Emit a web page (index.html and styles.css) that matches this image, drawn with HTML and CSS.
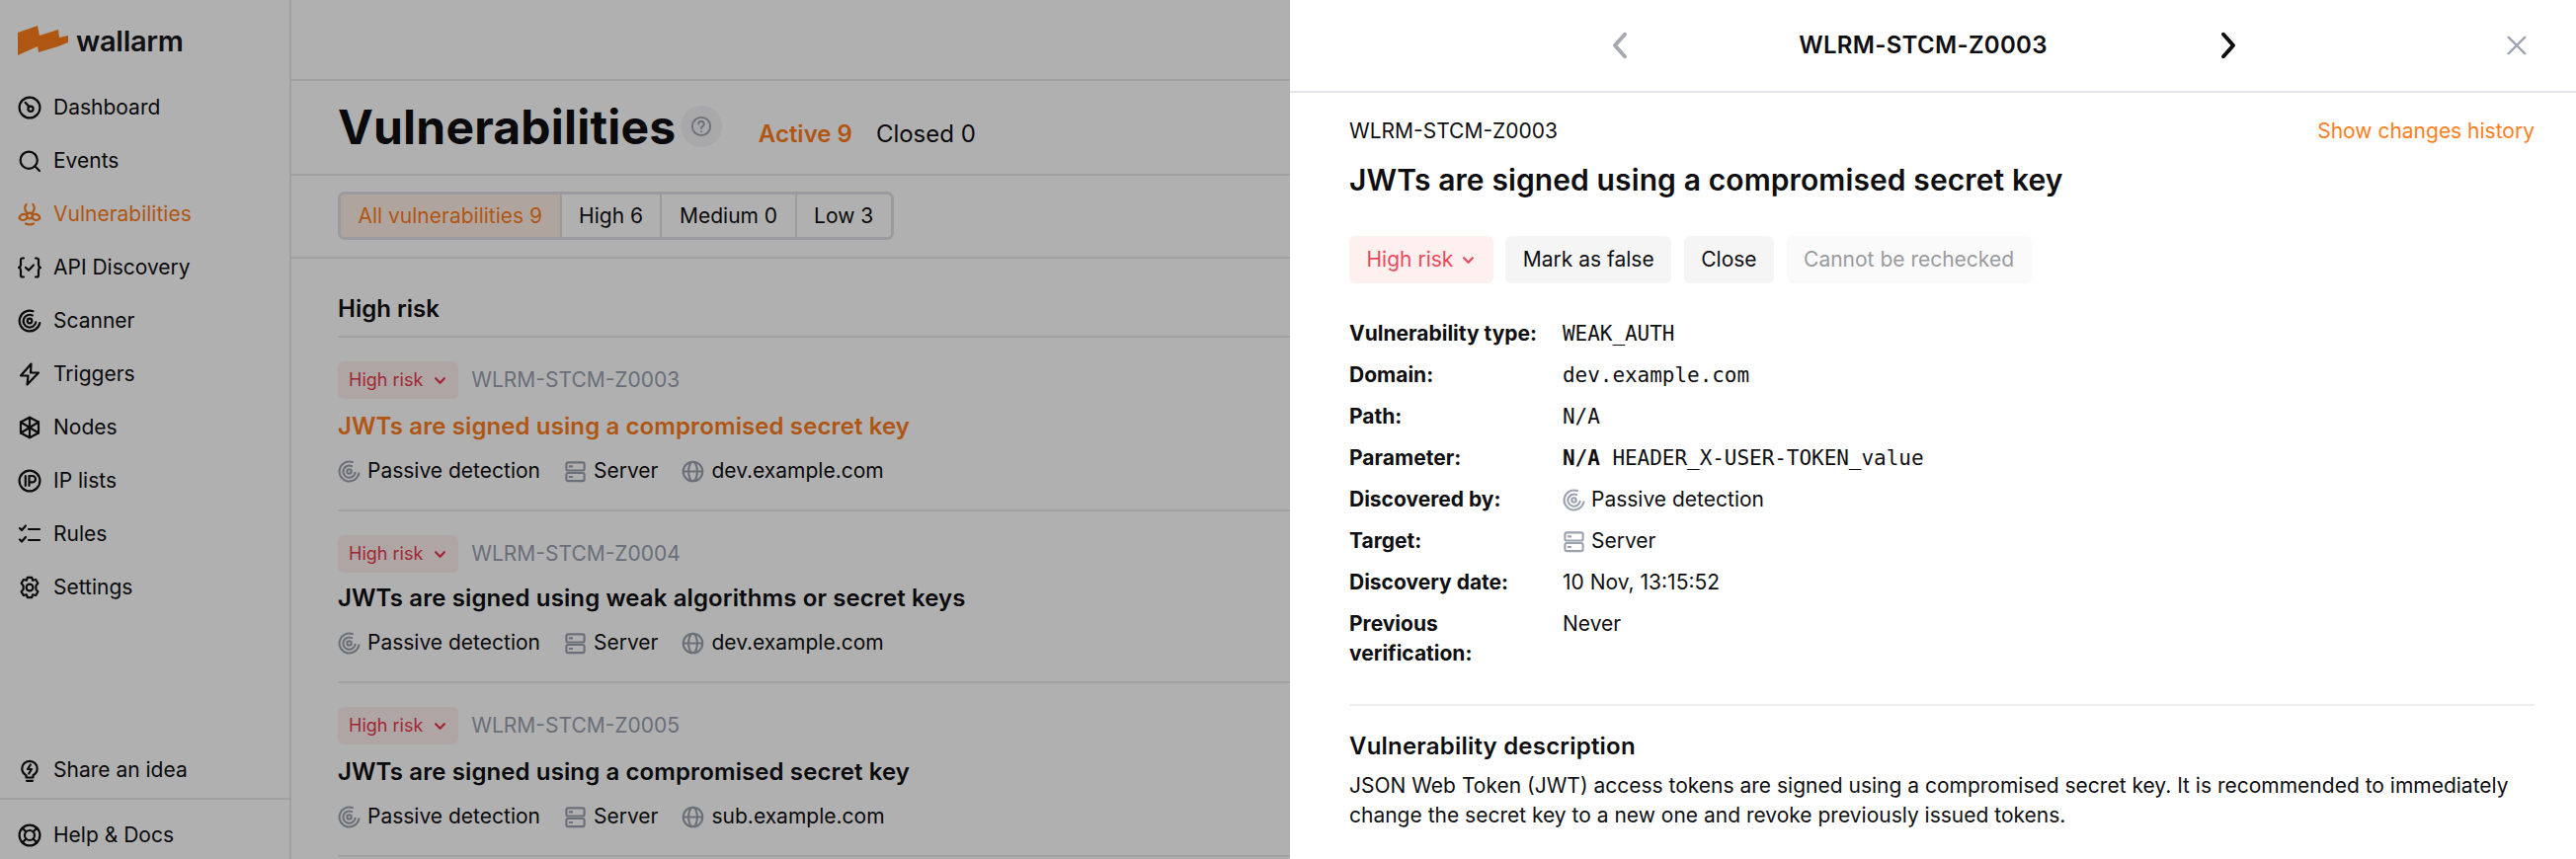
FILE: index.html
```html
<!DOCTYPE html>
<html lang="en">
<head>
<meta charset="utf-8">
<title>Vulnerabilities</title>
<link rel="stylesheet" href="styles.css">
</head>
<body>
<svg class="defs" width="0" height="0" aria-hidden="true">
  <symbol id="i-scan" viewBox="0 0 24 24"><path d="M15.500 2.200A10.400 10.400 0 1 0 22.300 14" /><path d="M14.800 6.400A6.400 6.400 0 1 0 18.300 13.400" /><circle cx="12" cy="12" r="2.300"/></symbol>
  <symbol id="i-server" viewBox="0 0 24 24"><rect x="2.500" y="2.500" width="19" height="8.500" rx="2"/><rect x="2.500" y="13.500" width="19" height="8.500" rx="2"/><path d="M6 6.700h2.500M6 17.700h2.500"/></symbol>
  <symbol id="i-globe" viewBox="0 0 24 24"><circle cx="12" cy="12" r="10.200"/><ellipse cx="12" cy="12" rx="4.600" ry="10.200"/><path d="M2 12h20"/></symbol>
  <symbol id="i-chev" viewBox="0 0 12 12"><path d="M2.500 4.200 6 7.800l3.500-3.600"/></symbol>
</svg>

<div class="app">
  <aside class="sidebar">
    <div class="logo">
      <svg class="logo-mark" viewBox="0 0 51 30"><polygon points="0,7 20,0 22,10 41,4 42,12 51,10 51,17 41,21 21,27 20,21 0,30"/></svg>
      <span class="logo-text">wallarm</span>
    </div>
    <nav class="nav">
      <a class="nav-item"><svg class="nav-icon" viewBox="0 0 24 24"><circle cx="12" cy="12" r="10.400"/><circle cx="13" cy="13.200" r="2.600"/><path d="M11.400 11 7.600 6.800"/></svg>Dashboard</a>
      <a class="nav-item"><svg class="nav-icon" viewBox="0 0 24 24"><circle cx="11.200" cy="11.200" r="8.600"/><path d="m17.500 17.500 4.500 4.500"/></svg>Events</a>
      <a class="nav-item active"><svg class="nav-icon" viewBox="0 0 24 24"><circle cx="12" cy="13.500" r="2.800"/><path d="M8.500 2C6.500 5 7 9 10 11.200M15.500 2C17.500 5 17 9 14 11.200M1.500 16C2 13 5 11 8.500 12.500M9.500 15.500C8 18.500 4 19 1.500 16M22.500 16C22 13 19 11 15.500 12.500M14.500 15.500C16 18.500 20 19 22.500 16M8 21.500c2.500 1 5.500 1 8 0"/></svg>Vulnerabilities</a>
      <a class="nav-item"><svg class="nav-icon" viewBox="0 0 24 24"><path d="M6 2.500H4.800A1.800 1.800 0 0 0 3 4.300v5.200c0 1.300-.7 2-2 2.500 1.300.5 2 1.200 2 2.500v5.200a1.800 1.800 0 0 0 1.800 1.800H6M18 2.500h1.200A1.800 1.800 0 0 1 21 4.300v5.200c0 1.300.7 2 2 2.500-1.300.5-2 1.200-2 2.500v5.200a1.800 1.800 0 0 1-1.800 1.800H18"/><path d="m8 12 3 2.800 5-5.300"/></svg>API Discovery</a>
      <a class="nav-item"><svg class="nav-icon" viewBox="0 0 24 24"><use href="#i-scan"/></svg>Scanner</a>
      <a class="nav-item"><svg class="nav-icon" viewBox="0 0 24 24"><path d="M13.500 1.500 3 13.500h7.500l-1 9L21 10.500h-8z"/></svg>Triggers</a>
      <a class="nav-item"><svg class="nav-icon" viewBox="0 0 24 24"><path d="M12 1.800 21 6.500v11L12 22.200 3 17.500v-11z"/><path d="M12 1.800v20.400M3 6.500l18 11M21 6.500l-18 11"/></svg>Nodes</a>
      <a class="nav-item"><svg class="nav-icon" viewBox="0 0 24 24"><circle cx="12" cy="12" r="10.400"/><path d="M7.800 7v10M11.500 17V7h3.300a3 3 0 0 1 0 6.400h-3.300"/></svg>IP lists</a>
      <a class="nav-item"><svg class="nav-icon" viewBox="0 0 24 24"><path d="m2 6 2 2 4-4.500M2 17.500l2 2 4-4.500M11 7h11M11 18h11"/></svg>Rules</a>
      <a class="nav-item"><svg class="nav-icon" viewBox="0 0 24 24"><circle cx="12" cy="12" r="3.400"/><path d="M9.800 1.800h4.400l1 3 3-.8 2.200 3.800-2 2.300 0 3.800 2 2.300-2.200 3.800-3-.8-1 3H9.800l-1-3-3 .8-2.200-3.800 2-2.300 0-3.800-2-2.300L5.800 4l3 .8z"/></svg>Settings</a>
    </nav>
    <div class="nav-bottom">
      <a class="nav-item"><svg class="nav-icon" viewBox="0 0 24 24"><path d="M8.500 19.500v-2.300C6 15.800 4.300 13.300 4.300 10.500a7.700 7.700 0 0 1 15.400 0c0 2.800-1.700 5.300-4.200 6.700v2.300zM9 22.800h6"/><path d="M12.800 6.500 10 11h4l-2.800 4.500"/></svg>Share an idea</a>
      <a class="nav-item help"><svg class="nav-icon" viewBox="0 0 24 24"><circle cx="12" cy="12" r="10.400"/><circle cx="12" cy="12" r="5"/><path d="m4.700 4.700 3.800 3.800M19.300 4.700l-3.800 3.800M4.700 19.300l3.800-3.800M19.300 19.300l-3.800-3.800"/></svg>Help &amp; Docs</a>
    </div>
  </aside>

  <main class="main">
    <div class="topbar"></div>
    <header class="page-head">
      <h1 class="page-title">Vulnerabilities</h1>
      <span class="help-btn"><svg viewBox="0 0 24 24"><circle cx="12" cy="12" r="10"/><path d="M9 9.300a3 3 0 1 1 4.500 2.600c-1 .6-1.500 1.200-1.500 2.400M12 17.500v.2"/></svg></span>
      <span class="tab tab-active">Active 9</span>
      <span class="tab">Closed 0</span>
    </header>
    <div class="filters">
      <div class="filter-group">
        <span class="filter filter-on">All vulnerabilities 9</span>
        <span class="filter">High 6</span>
        <span class="filter">Medium 0</span>
        <span class="filter">Low 3</span>
      </div>
    </div>
    <section class="list">
      <h2 class="list-head">High risk</h2>

      <article class="row">
        <div class="row-top"><span class="pill">High risk<svg class="chev" viewBox="0 0 12 12"><use href="#i-chev"/></svg></span><span class="row-id">WLRM-STCM-Z0003</span></div>
        <h3 class="row-title row-title-on">JWTs are signed using a compromised secret key</h3>
        <div class="meta">
          <span class="meta-item"><svg class="meta-icon"><use href="#i-scan"/></svg>Passive detection</span>
          <span class="meta-item"><svg class="meta-icon"><use href="#i-server"/></svg>Server</span>
          <span class="meta-item"><svg class="meta-icon"><use href="#i-globe"/></svg>dev.example.com</span>
        </div>
      </article>

      <article class="row row-tight">
        <div class="row-top"><span class="pill">High risk<svg class="chev" viewBox="0 0 12 12"><use href="#i-chev"/></svg></span><span class="row-id">WLRM-STCM-Z0004</span></div>
        <h3 class="row-title">JWTs are signed using weak algorithms or secret keys</h3>
        <div class="meta">
          <span class="meta-item"><svg class="meta-icon"><use href="#i-scan"/></svg>Passive detection</span>
          <span class="meta-item"><svg class="meta-icon"><use href="#i-server"/></svg>Server</span>
          <span class="meta-item"><svg class="meta-icon"><use href="#i-globe"/></svg>dev.example.com</span>
        </div>
      </article>

      <article class="row">
        <div class="row-top"><span class="pill">High risk<svg class="chev" viewBox="0 0 12 12"><use href="#i-chev"/></svg></span><span class="row-id">WLRM-STCM-Z0005</span></div>
        <h3 class="row-title">JWTs are signed using a compromised secret key</h3>
        <div class="meta">
          <span class="meta-item"><svg class="meta-icon"><use href="#i-scan"/></svg>Passive detection</span>
          <span class="meta-item"><svg class="meta-icon"><use href="#i-server"/></svg>Server</span>
          <span class="meta-item"><svg class="meta-icon"><use href="#i-globe"/></svg>sub.example.com</span>
        </div>
      </article>
    </section>
  </main>
</div>

<div class="overlay"></div>

<aside class="drawer">
  <div class="drawer-bar">
    <svg class="bar-nav bar-prev" viewBox="0 0 16 24"><path d="M12 3 4 12l8 9"/></svg>
    <span class="bar-title">WLRM-STCM-Z0003</span>
    <svg class="bar-nav bar-next" viewBox="0 0 16 24"><path d="m4 3 8 9-8 9"/></svg>
    <svg class="bar-close" viewBox="0 0 24 24"><path d="m3 3 18 18M21 3 3 21"/></svg>
  </div>
  <div class="drawer-body">
    <div class="id-line"><span>WLRM-STCM-Z0003</span><a class="history">Show changes history</a></div>
    <h2 class="drawer-title">JWTs are signed using a compromised secret key</h2>
    <div class="actions">
      <span class="btn btn-risk">High risk<svg class="chev" viewBox="0 0 12 12"><use href="#i-chev"/></svg></span>
      <span class="btn">Mark as false</span>
      <span class="btn">Close</span>
      <span class="btn btn-off">Cannot be rechecked</span>
    </div>
    <dl class="details">
      <dt>Vulnerability type:</dt><dd class="mono">WEAK_AUTH</dd>
      <dt>Domain:</dt><dd class="mono">dev.example.com</dd>
      <dt>Path:</dt><dd class="mono">N/A</dd>
      <dt>Parameter:</dt><dd class="mono"><b>N/A</b> HEADER_X-USER-TOKEN_value</dd>
      <dt>Discovered by:</dt><dd class="with-icon"><svg class="meta-icon"><use href="#i-scan"/></svg>Passive detection</dd>
      <dt>Target:</dt><dd class="with-icon"><svg class="meta-icon"><use href="#i-server"/></svg>Server</dd>
      <dt>Discovery date:</dt><dd>10 Nov, 13:15:52</dd>
      <dt>Previous verification:</dt><dd>Never</dd>
    </dl>
    <div class="desc">
      <h3 class="desc-title">Vulnerability description</h3>
      <p class="desc-text">JSON Web Token (JWT) access tokens are signed using a compromised secret key. It is recommended to immediately change the secret key to a new one and revoke previously issued tokens.</p>
    </div>
  </div>
</aside>
</body>
</html>
```
FILE: styles.css
```css
* { box-sizing: border-box; }
html, body { margin: 0; height: 870px; overflow: hidden; }
body { position: relative; background: #fff; color: #0f0f12; font: 400 21px/30px Inter, "Liberation Sans", sans-serif; }
h1, h2, h3, p, dl, dd, dt { margin: 0; }
.defs { position: absolute; }
svg { fill: none; stroke: currentColor; stroke-width: 2; stroke-linecap: round; stroke-linejoin: round; flex: none; }

.app { display: flex; height: 870px; }
.sidebar { width: 295px; flex: none; border-right: 2px solid #e9e9ee; display: flex; flex-direction: column; }
.logo { height: 82px; padding: 26px 0 0 18px; display: flex; align-items: flex-start; gap: 8px; }
.logo-mark { width: 51px; height: 30px; fill: #ff7d1c; stroke: none; }
.logo-text { font-size: 29px; font-weight: 600; line-height: 30px; margin-top: 1px; color: #1a1a1e; letter-spacing: -0.3px; }
.nav-item { height: 54px; display: flex; align-items: center; gap: 12px; padding-left: 18px; color: #0f0f12; }
.nav-icon { width: 24px; height: 24px; stroke-width: 2.200; }
.nav-item.active { color: #ff7d1c; }
.nav { display: flex; flex-direction: column; }
.nav-bottom { margin-top: auto; }
.nav-item.help { height: 62px; margin-top: 1px; border-top: 2px solid #e9e9ee; padding-top: 12px; }

.main { flex: 1; min-width: 0; }
.topbar { height: 82px; border-bottom: 2px solid #e9e9ee; }
.page-head { height: 96px; padding: 0 0 0 47px; border-bottom: 2px solid #e9e9ee; display: flex; align-items: center; }
.page-title { font-size: 48px; line-height: 58px; font-weight: 700; letter-spacing: .2px; }
.help-btn { width: 42px; height: 42px; margin-left: 5px; margin-top: -2px; border-radius: 50%; background: #f3f4f6; color: #9aa1af; display: flex; align-items: center; justify-content: center; }
.help-btn svg { width: 22px; height: 22px; }
.tab { font-size: 24px; margin-left: 24px; margin-top: 14px; }
.tab-active { color: #ff7d1c; font-weight: 600; margin-left: 36.500px; }
.filters { height: 84px; padding: 16px 0 0 47px; border-bottom: 2px solid #e9e9ee; }
.filter-group { display: inline-flex; height: 49px; border: 3px solid #e0e0e6; border-radius: 7px; overflow: hidden; }
.filter { display: flex; align-items: center; padding: 0 17.500px; border-left: 2px solid #e0e0e6; }
.filter:first-child { border-left: 0; }
.filter-on { background: #fff0e5; color: #ff7d1c; }

.list { padding-left: 47px; }
.list-head { font-size: 24px; line-height: 30px; font-weight: 600; padding: 36px 0 12px; border-bottom: 2px solid #e9e9ee; height: 80px; }
.row { height: 176px; padding-top: 24px; border-bottom: 2px solid #e9e9ee; }
.row-tight { height: 174px; }
.row-top { display: flex; align-items: center; gap: 13px; }
.pill { height: 38px; padding: 0 11px; font-size: 18px; border-radius: 6px; background: #fff0f0; color: #e9394a; display: inline-flex; align-items: center; gap: 10px; }
.chev { width: 15px; height: 15px; stroke-width: 1.800; }
.row-id { color: #9aa1af; margin-top: -1px; }
.row-title { font-size: 24px; line-height: 30px; font-weight: 600; margin-top: 13px; letter-spacing: .11px; }
.row-title-on { color: #ff7d1c; }
.row-tight .row-title { margin-top: 11px; }
.meta { display: flex; gap: 24px; margin-top: 15px; }
.meta-item { display: flex; align-items: center; gap: 7px; }
.meta-icon { width: 23px; height: 23px; color: #9aa1af; stroke-width: 2.200; }

.overlay { position: absolute; inset: 0; background: rgba(0,0,0,.31); }

.drawer { position: absolute; top: 0; right: 0; bottom: 0; width: 1302px; background: #fff; }
.drawer-bar { position: relative; height: 94px; padding-right: 18px; border-bottom: 2px solid #e2e4ea; display: flex; align-items: center; justify-content: center; }
.bar-title { font-size: 24px; font-weight: 600; letter-spacing: .3px; }
.bar-nav { width: 20px; height: 30px; stroke-width: 3.200; margin: 0 173px; }
.bar-prev { color: #a6a9b2; margin-right: 171px; }
.bar-next { color: #0f0f12; }
.bar-close { position: absolute; right: 49px; top: 35px; width: 22px; height: 22px; color: #9aa1af; stroke-width: 2.600; }
.drawer-body { padding: 24px 42px 0 60px; }
.id-line { display: flex; justify-content: space-between; }
.history { color: #ff7d1c; }
.drawer-title { font-size: 30px; line-height: 40px; font-weight: 600; margin-top: 14px; letter-spacing: .11px; }
.actions { display: flex; gap: 12.500px; margin-top: 37px; }
.btn { height: 48px; padding: 0 17.500px; border-radius: 6px; background: #f5f5f6; display: inline-flex; align-items: center; }
.btn-risk { background: #fff0f0; color: #f0485a; gap: 8px; }
.btn-off { background: #fafafa; color: #9a9a9f; }
.details { display: grid; grid-template-columns: 216px 1fr; row-gap: 12px; margin-top: 36px; }
.details dt { font-weight: 700; max-width: 200px; }
.mono { font-family: "DejaVu Sans Mono", "Liberation Mono", monospace; font-size: 21px; letter-spacing: -0.04px; }
.mono b { font-weight: 700; }
.with-icon { display: flex; align-items: center; gap: 6px; }
.desc { margin-top: 36px; border-top: 2px solid #eeeef2; padding-top: 26px; }
.desc-title { font-size: 24px; line-height: 30px; font-weight: 600; letter-spacing: .2px; }
.desc-text { margin-top: 10px; }
```
